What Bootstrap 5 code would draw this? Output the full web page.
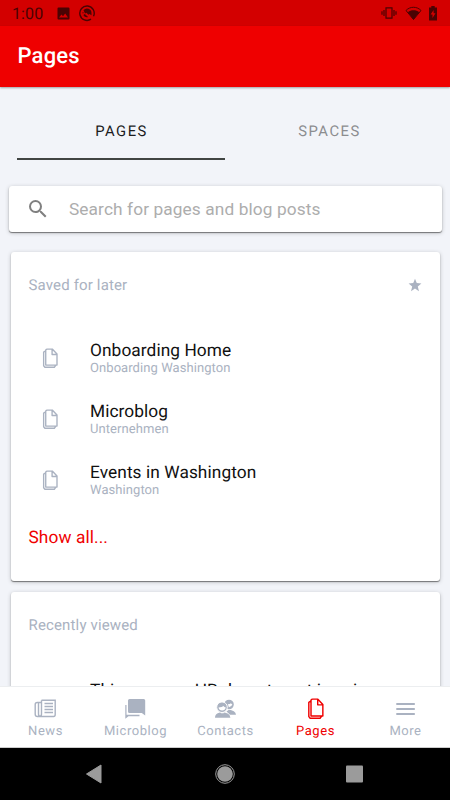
<!DOCTYPE html>
<html lang="en">
<head>
<meta charset="utf-8">
<meta name="viewport" content="width=device-width, initial-scale=1">
<title>Pages</title>
<link href="https://cdn.jsdelivr.net/npm/bootstrap@5.3.0/dist/css/bootstrap.min.css" rel="stylesheet">
<style>
body{font-family:Roboto,"Liberation Sans",sans-serif;background:#f2f4f9;color:#111;text-rendering:geometricPrecision}
.screen{height:800px}
svg{display:block;flex:none}
.statusbar{height:26px;background:#d30000;color:#4a0303;padding:0 12px 0 12px}
.clock{font-size:16px;line-height:26px;letter-spacing:.1px;width:45px;padding-top:1px}
.appbar{height:61px;background:#ef0000;padding-left:17.500px;box-shadow:0 1px 2px rgba(0,0,0,.35);z-index:1}
.appbar h1{font-size:22px;font-weight:500;line-height:62px;letter-spacing:.2px}
.page-tabs{padding:18px 17px 0;height:73px}
.page-tabs a{height:55px;line-height:53px;font-size:14.8px;letter-spacing:1.500px;padding-left:1px;color:#8c8d90;border-bottom:2px solid transparent}
.page-tabs a.active{color:#1c1c1e;border-color:#414543}
.surface{background:#fff;border-radius:3px;box-shadow:0 1px 1px rgba(0,0,0,.45),0 1px 4px rgba(0,0,0,.22)}
.search{margin:26px 8px 0 9px;height:46px;padding-left:17px;color:#808080}
.search input{font-size:17.3px;padding:0 0 0 19px;height:46px;letter-spacing:.1px}
.search input::placeholder{color:#adadad;opacity:1}
.saved{margin:20px 10px 0 11px;height:329px;padding:16px 18px 0 17.500px}
.recent{margin:11px 10px 0 11px;height:250px;padding:16px 18px 0 17.500px}
.surface h2{font-size:15px;line-height:34px;font-weight:400;letter-spacing:.15px;color:#aab2c1}
.muted{color:#aab2c1}
.entries{padding-top:25px}
.entry{height:61.300px;padding-left:9.500px}
.entry-text{margin-left:28px;padding-top:2px}
.entry:last-child .entry-text{padding-top:1px}
.recent .entry:last-child .entry-text{padding-top:14px}
.entry-title{font-size:17.3px;line-height:20px;letter-spacing:.08px}
.entry-sub{font-size:13px;line-height:15px;letter-spacing:.07px;color:#aab2c1}
.show-all{font-size:17.3px;line-height:22px;margin-top:16px;letter-spacing:.1px;color:#ef0000}
.bottom-tabs{height:62px;background:#fff;border-top:1px solid #eceef0;border-bottom:1px solid #ccc;font-size:13px;letter-spacing:.55px;color:#aab2c1;z-index:2}
.bottom-tabs a{color:inherit;width:90px;padding-top:9px}
.bottom-tabs a.active{color:#ef0000}
.bottom-tabs span{line-height:18px;margin-top:3px;padding-left:1px}
.sysnav{height:52px;background:#000}
</style>
<script src="https://cdn.jsdelivr.net/npm/bootstrap@5.3.0/dist/js/bootstrap.bundle.min.js"></script>
</head>
<body>
<svg width="0" height="0" class="position-absolute" aria-hidden="true">
<symbol id="docs" viewBox="0 0 18 22"><path d="M4.300 2.200Q4.800 1.200 6 1.200h5.500l5.200 5.500V18.800H4.300zM11.300 1.400v5.800h5.200M4.300 3 2 4.500V19.500l1.400 1.700h10.400l1.500-2" fill="none" stroke="currentColor" stroke-width="1.500" stroke-linejoin="round"/></symbol>
</svg>
<div class="screen d-flex flex-column overflow-hidden">
<div class="statusbar d-flex align-items-center flex-shrink-0">
<div class="clock">1:00</div>
<svg width="13" height="13" viewBox="0 0 13 13"><path fill="currentColor" fill-rule="evenodd" d="M1.500.5h10a1 1 0 0 1 1 1v10a1 1 0 0 1-1 1h-10a1 1 0 0 1-1-1v-10a1 1 0 0 1 1-1zM2 10.500h9L8.200 6.400 6 9.300 4.500 7.600z"/></svg>
<svg class="ms-2" width="18" height="18" viewBox="0 0 18 18"><path d="M13 15.200A7.200 7.200 0 1 1 15.500 12.300" fill="none" stroke="currentColor" stroke-width="1.400"/><path fill="currentColor" d="M5.500 6.200A4.500 4.500 0 0 1 13.500 9v2.300l-2-1.300-1.200.8-1.800-2-1.500.7zM4.500 7.800l1.300 1-1 1zM5.300 11l1.500-1 3.300 3a4.300 4.300 0 0 1-4.800-2z"/></svg>
<svg class="ms-auto" width="16" height="14" viewBox="0 0 16 14"><path d="M5 1.800h6v10.400H5zM3 4v6M13 4v6M1 5.300v3.400M15 5.300v3.400" fill="none" stroke="currentColor" stroke-width="1.200"/></svg>
<svg class="ms-2" width="17" height="15" viewBox="0 0 17 15"><path d="M1 4.500c4-4.300 11-4.300 15 0L8.500 13.500z" fill="none" stroke="currentColor"/><path d="M2.900 6.200c3-2.600 8.200-2.600 11.200 0L8.500 13.800z" fill="currentColor"/></svg>
<svg class="ms-1" width="12" height="15" viewBox="0 0 12 15"><path fill="currentColor" fill-rule="evenodd" d="M5.300 0h3.400v1.500H11V14.500H3V1.500h2.300zM7.600 4 4.600 8.500h1.900V12l3-4.700H7.600z"/></svg>
</div>
<header class="appbar flex-shrink-0 position-relative text-white"><h1 class="m-0">Pages</h1></header>
<main class="flex-grow-1 overflow-hidden">
<nav class="page-tabs d-flex text-center"><a href="#" class="active w-50 text-decoration-none">PAGES</a><a href="#" class="w-50 text-decoration-none">SPACES</a></nav>
<div class="search surface d-flex align-items-center"><svg width="24" height="24" viewBox="0 0 24 24"><path fill="currentColor" d="M15.500 14h-.79l-.28-.27A6.470 6.470 0 0 0 16 9.500 6.500 6.500 0 1 0 9.500 16c1.610 0 3.090-.59 4.230-1.570l.27.28v.79l5 4.990L20.490 19zm-6 0C7.010 14 5 11.990 5 9.500S7.010 5 9.500 5 14 7.010 14 9.500 11.990 14 9.500 14z"/></svg><input class="form-control border-0 bg-transparent shadow-none" placeholder="Search for pages and blog posts" aria-label="Search"></div>
<section class="saved surface">
<div class="d-flex align-items-center justify-content-between"><h2 class="m-0">Saved for later</h2><svg class="muted" width="14" height="14" viewBox="0 0 24 24"><path fill="currentColor" d="m12 18 6.800 4.500-2-8L23 9.300l-8-.6L12 1.300 9 8.700l-8 .6 6.200 5.200-2 8z"/></svg></div>
<div class="entries">
<div class="entry d-flex align-items-center"><svg class="muted" width="24" height="20"><use href="#docs"/></svg><div class="entry-text"><div class="entry-title">Onboarding Home</div><div class="entry-sub">Onboarding Washington</div></div></div>
<div class="entry d-flex align-items-center"><svg class="muted" width="24" height="20"><use href="#docs"/></svg><div class="entry-text"><div class="entry-title">Microblog</div><div class="entry-sub">Unternehmen</div></div></div>
<div class="entry d-flex align-items-center"><svg class="muted" width="24" height="20"><use href="#docs"/></svg><div class="entry-text"><div class="entry-title">Events in Washington</div><div class="entry-sub">Washington</div></div></div>
</div>
<a href="#" class="show-all d-block text-decoration-none">Show all...</a>
</section>
<section class="recent surface">
<h2 class="m-0">Recently viewed</h2>
<div class="entries"><div class="entry d-flex align-items-start"><div class="entry-text ps-4"><div class="entry-title text-nowrap">This year our HR department is using</div></div></div></div>
</section>
</main>
<nav class="bottom-tabs d-flex flex-shrink-0">
<a href="#" class="d-flex flex-column align-items-center text-decoration-none"><svg width="24" height="24" viewBox="0 0 24 24"><path d="M8.500 4.200h13.700v14.300q0 2-1.500 2H4.500q-2.300 0-2.300-2.300V8.500q0-2 2-2H5M8.500 4.200v13.500q0 2.500-1.500 2.500t-1.500-2.500V6.500h3" fill="none" stroke="currentColor" stroke-width="1.400"/><path d="M11.500 7.500h8.500M11.500 10.500h8.500M11.500 13.500h8.500M11.500 16.500h8.500" stroke="currentColor" stroke-width="1.500"/></svg><span>News</span></a>
<a href="#" class="d-flex flex-column align-items-center text-decoration-none"><svg width="24" height="24" viewBox="0 0 24 24"><path fill="currentColor" d="M6.500 3h14.200q1.500 0 1.500 1.500v15L18.800 17H6.500Q5 17 5 15.500v-11Q5 3 6.500 3zM2.300 9H3.500v9.800H16.500v1.400H5.500l-3.200 2.600z"/></svg><span>Microblog</span></a>
<a href="#" class="d-flex flex-column align-items-center text-decoration-none"><svg width="24" height="24" viewBox="0 0 24 24"><g fill="currentColor"><circle cx="16" cy="8.500" r="4.800"/><path d="M13.500 15.500l2-1.500h2.300l3 1.300q2 1 2.200 3.500h-6z"/><circle cx="9" cy="11.200" r="5.300" stroke="#fff"/><path d="M2 21.800q0-3.500 2.700-4.500l2.300-.9q2.300 1.700 4.600 0l3 1.100q2.500 1 2.800 4.300z"/></g><path fill="#fff" d="M5.500 11.500q3.800-.1 5-1.500.8 1.300 2.300 1.500-.7 3-3.700 3t-3.600-3zM14.700 8.300q2.400 0 3.300-1 .4.900 1.400 1-.8 2.800-3.600 3-.2-1.700-1.100-3z"/></svg><span>Contacts</span></a>
<a href="#" class="active d-flex flex-column align-items-center text-decoration-none"><svg width="24" height="24" viewBox="0 0 24 24"><use href="#docs" x="3.500" y="2" width="18" height="21"/></svg><span>Pages</span></a>
<a href="#" class="d-flex flex-column align-items-center text-decoration-none"><svg width="24" height="24" viewBox="0 0 24 24"><path d="M3.300 8h18.500M3.300 13h18.500M3.300 18h18.500" stroke="currentColor" stroke-width="1.900"/></svg><span>More</span></a>
</nav>
<div class="sysnav d-flex flex-shrink-0 align-items-center justify-content-center">
<svg width="300" height="22" viewBox="0 0 300 22"><path d="M11.500 11 26 2v18z" fill="#9b9b9b" stroke="#9b9b9b" stroke-linejoin="round"/><circle cx="150" cy="11" r="9.300" fill="none" stroke="#9b9b9b"/><circle cx="150" cy="11" r="7.800" fill="#9b9b9b"/><rect x="271" y="2.500" width="17" height="17" rx="1" fill="#9b9b9b"/></svg>
</div>
</div>
</body>
</html>
